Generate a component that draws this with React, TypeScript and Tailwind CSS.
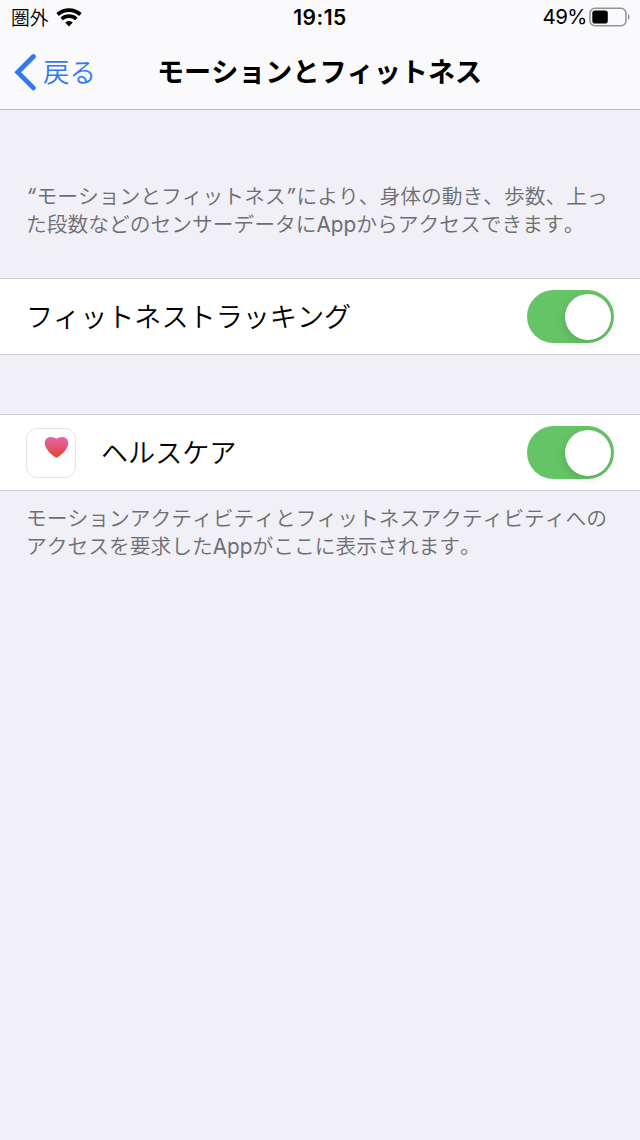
import type { ReactNode } from "react";

function Toggle() {
  return (
    <div className="flex h-[53px] w-[87px] items-center justify-end rounded-full bg-[#65c466] pr-[3px]">
      <div className="size-[46px] rounded-full bg-white shadow-[-1px_3px_8px_rgba(0,0,0,0.13)]" />
    </div>
  );
}

function Row({ children }: { children: ReactNode }) {
  return (
    <div className="flex h-[77px] items-center justify-between border-y border-[#cbcbd0] bg-white pr-[26px] pl-[26px] text-[27.1px] text-black">
      {children}
      <Toggle />
    </div>
  );
}

function WifiIcon() {
  return (
    <svg width="26" height="19" viewBox="0 0 26 19" fill="none" stroke="#000">
      <path d="M1.6 6.5C8.1 .6 17.9 .6 24.4 6.5" strokeWidth="3.8" />
      <path d="M5.7 11C9.8 7.2 16.2 7.2 20.3 11" strokeWidth="3.6" />
      <path d="M9.2 14.6C11.2 12.4 14.8 12.4 16.8 14.6L13 18.4Z" fill="#000" stroke="none" />
    </svg>
  );
}

function BatteryIcon() {
  return (
    <svg className="mb-px" width="42" height="20" viewBox="0 0 42 20">
      <rect x="1" y="1.2" width="36" height="17.6" rx="5" fill="none" stroke="#939395" strokeWidth="1.5" />
      <rect x="3.3" y="3.5" width="15.5" height="13" rx="2.8" fill="#000" />
      <path d="M39 7C41 8 41 12 39 13Z" fill="#929294" />
    </svg>
  );
}

function HealthIcon() {
  return (
    <div className="flex size-[50px] justify-end rounded-[11px] border border-[#e4e4e6] bg-white pt-[7px] pr-[6px]">
      <svg width="25" height="23" viewBox="0 0 25 23">
        <defs>
          <linearGradient id="heart" x1="0" y1="0" x2="0" y2="1">
            <stop offset="0" stopColor="#e564ad" />
            <stop offset="1" stopColor="#e6432c" />
          </linearGradient>
        </defs>
        <path d="M12.5 21.7C10 20.5 .8 14.2 .8 7.2C.8 3.5 3.3 1 6.7 1C9.4 1 11.4 2 12.5 2.7C13.6 2 15.6 1 18.3 1C21.7 1 24.2 3.5 24.2 7.2C24.2 14.2 15 20.5 12.5 21.7Z" fill="url(#heart)" />
      </svg>
    </div>
  );
}

export default function App() {
  return (
    <div className="h-[1140px] w-[640px] overflow-hidden bg-[#f0f0f6] font-['Inter','Noto_Sans_CJK_JP',sans-serif] [font-kerning:none]">
      <header className="h-[110px] border-b border-[#bcbcc1] bg-[#fafafc]">
        <div className="grid h-[35px] grid-cols-3 items-center pr-[9px] pl-[11px] text-black">
          <div className="flex items-center gap-[7px] text-[18.8px]">
            <span className="font-['Noto_Sans_CJK_JP',sans-serif] font-[350]">圏外</span>
            <WifiIcon />
          </div>
          <div className="pr-[2px] text-center text-[21px] font-semibold tracking-[0.5px]">19:15</div>
          <div className="flex items-center justify-end gap-[2px] text-[20.5px] tracking-[-0.5px]">
            <span>49%</span>
            <BatteryIcon />
          </div>
        </div>
        <div className="grid h-[73px] grid-cols-[157px_326px_1fr] items-center font-['Noto_Sans_CJK_JP',sans-serif]">
          <div className="flex items-center gap-[6px] pl-[14px] text-[26.5px] font-[350] text-[#3478f0]">
            <svg width="23" height="38" viewBox="0 0 23 38" fill="none" stroke="currentColor" strokeWidth="4.8" strokeLinecap="round" strokeLinejoin="miter">
              <path d="M19.4 3.5L3.7 19.2L19.4 34.9" />
            </svg>
            <span className="pb-[2px]">戻る</span>
          </div>
          <h1 className="text-[27.1px] font-bold whitespace-nowrap text-black">モーションとフィットネス</h1>
        </div>
      </header>
      <main className="font-['Noto_Sans_CJK_JP',sans-serif] font-[350]">
        <p className="h-[168px] pt-[71px] pl-[26px] text-[20.75px] leading-[28px] whitespace-nowrap text-[#6d6d72]">
          <span className="pr-[0.5px] font-['Inter'] leading-none font-normal italic">“</span>モーションとフィットネス<span className="pr-px font-['Inter'] leading-none font-normal italic">”</span>により、身体の動き、歩数、上っ
          <br />
          た段数などのセンサーデータに<span className="font-['Inter'] leading-none font-normal">App</span>からアクセスできます。
        </p>
        <Row>
          <span>フィットネストラッキング</span>
        </Row>
        <div className="h-[59px]" />
        <Row>
          <div className="flex items-center gap-[25px]">
            <HealthIcon />
            <span>ヘルスケア</span>
          </div>
        </Row>
        <p className="pt-[12px] pl-[26px] text-[20.75px] leading-[28px] whitespace-nowrap text-[#6d6d72]">
          モーションアクティビティとフィットネスアクティビティへの
          <br />
          アクセスを要求した<span className="font-['Inter'] leading-none font-normal">App</span>がここに表示されます。
        </p>
      </main>
    </div>
  );
}
